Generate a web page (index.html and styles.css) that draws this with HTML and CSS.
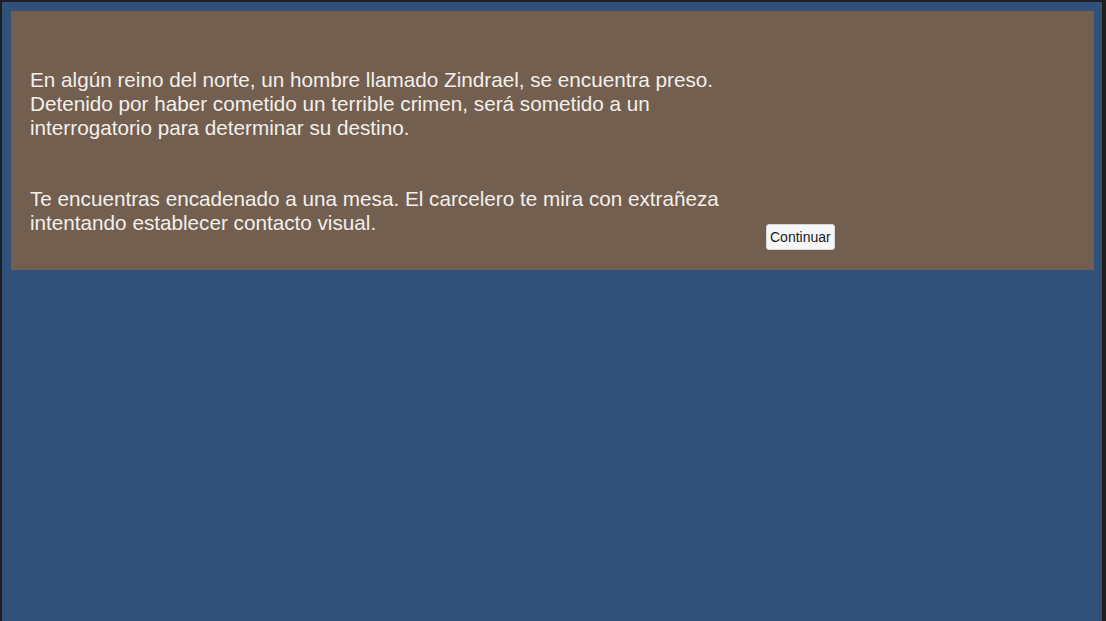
FILE: index.html
```html
<!DOCTYPE html>
<html lang="es">
<head>
<meta charset="utf-8">
<title>Zindrael</title>
<link rel="stylesheet" href="styles.css">
</head>
<body>
<div class="stage">
  <div class="panel">
    <div class="story">
      <p class="para">En algún reino del norte, un hombre llamado Zindrael, se encuentra preso. Detenido por haber cometido un terrible crimen, será sometido a un interrogatorio para determinar su destino.</p>
      <p class="para">Te encuentras encadenado a una mesa. El carcelero te mira con extrañeza intentando establecer contacto visual.</p>
    </div>
    <button class="continue" type="button">Continuar</button>
  </div>
</div>
</body>
</html>
```

FILE: styles.css
```css
html, body {
  margin: 0;
  height: 100%;
}
body {
  background: #1f1f1f;
  padding: 2px 4px 0 2px;
  box-sizing: border-box;
  overflow: hidden;
  font-family: "Liberation Sans", Arial, sans-serif;
}
.stage {
  background: #31507a;
  height: 619px;
  padding: 9px 8px 0 9px;
  box-sizing: border-box;
}
.panel {
  background: #735f50;
  height: 259px;
  box-sizing: border-box;
  padding: 57px 0 0 19px;
  display: flex;
  align-items: flex-start;
}
.story {
  width: 730px;
  color: #f3efeb;
  font-size: 20.7px;
  line-height: 24px;
}
.para {
  margin: 0;
}
.para + .para {
  margin-top: 47px;
}
.continue {
  margin: 156px 0 0 6px;
  font-family: "Liberation Sans", Arial, sans-serif;
  font-size: 14px;
  line-height: 16px;
  padding: 4px 3px;
  height: 26px;
  color: #1a1a1a;
  background: #f7f7f7;
  border: 1px solid #d8d8d8;
  border-radius: 3px;
}
```
